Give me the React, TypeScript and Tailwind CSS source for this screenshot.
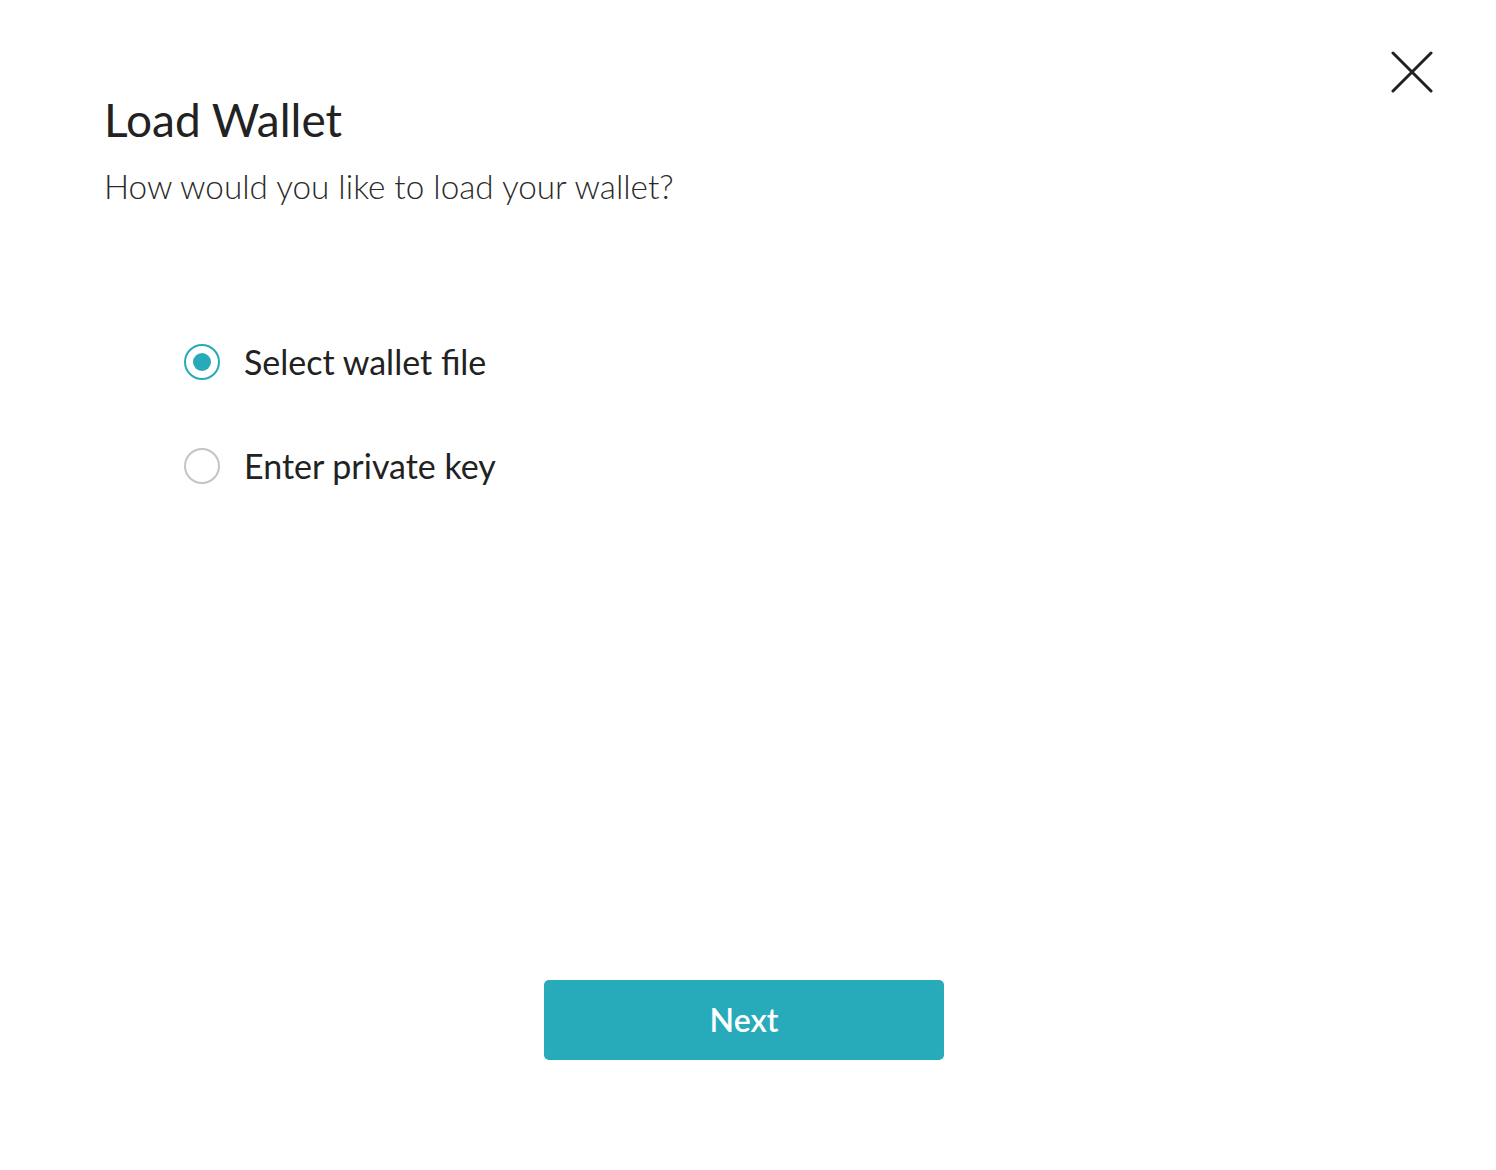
import React, { useState } from 'react';

const options = [
  { id: 'file', label: 'Select wallet file' },
  { id: 'key', label: 'Enter private key' },
];

export default function App() {
  const [choice, setChoice] = useState('file');

  return (
    <div className="relative min-h-[1170px] w-full bg-white text-[#222222]" style={{ fontFamily: 'Lato, "Noto Sans", sans-serif' }}>
      <button className="absolute right-[62px] top-[50px] flex h-[44px] w-[44px] items-center justify-center" aria-label="Close">
        <svg width="42" height="42" viewBox="0 0 42 42" fill="none" stroke="#222222" strokeWidth="3" strokeLinecap="round">
          <path d="M2 2L40 40M40 2L2 40" />
        </svg>
      </button>

      <div className="flex flex-col px-[104px] pt-[92px]">
        <h1 className="text-[46px] leading-[56px] font-normal">Load Wallet</h1>
        <p className="mt-[18px] text-[33.3px] leading-[40px] font-light text-[#2a2a2a]">How would you like to load your wallet?</p>

        <div className="mt-[138px] flex flex-col gap-[68px] pl-[80px]">
          {options.map((o) => {
            const on = choice === o.id;
            return (
              <label key={o.id} className="flex h-[36px] cursor-pointer items-center gap-[24px]" onClick={() => setChoice(o.id)}>
                <span className={`flex h-[36px] w-[36px] items-center justify-center rounded-full border-2 ${on ? 'border-[#27aab9]' : 'border-[#c4c4c4]'}`}>
                  {on && <span className="h-[18px] w-[18px] rounded-full bg-[#27aab9]" />}
                </span>
                <span className="text-[34px] leading-[40px]">{o.label}</span>
              </label>
            );
          })}
        </div>
      </div>

      <div className="mt-[496px] flex justify-center pr-[8px]">
        <button className="h-[80px] w-[400px] rounded-[5px] bg-[#27aab9] text-[32px] font-semibold text-white">Next</button>
      </div>
    </div>
  );
}
